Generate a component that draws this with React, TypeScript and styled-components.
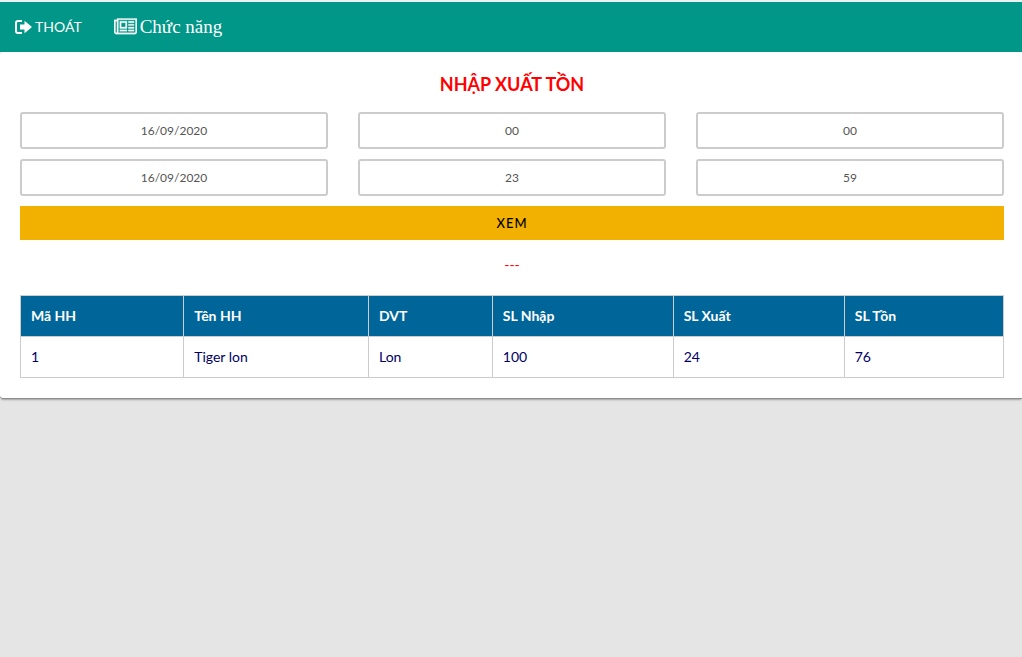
import React from "react";
import styled, { createGlobalStyle } from "styled-components";

const GlobalStyle = createGlobalStyle`
  *, *::before, *::after { box-sizing: border-box; }
  body {
    margin: 0;
    background: #e5e5e5;
    color: #444;
    font-family: Lato, "Open Sans", sans-serif;
    font-size: 14px;
    line-height: 20px;
  }
`;

const Page = styled.div`
  min-height: 100vh;
`;

const Header = styled.header`
  display: flex;
  align-items: center;
  gap: 32px;
  height: 52px;
  padding: 0 15px;
  background: #009688;
  border-top: 2px solid #e9f2f1;
`;

const NavLink = styled.a<{ $serif?: boolean }>`
  display: inline-flex;
  align-items: center;
  gap: 3px;
  color: #fff;
  text-decoration: none;
  font-family: ${(p) => (p.$serif ? '"Liberation Serif", serif' : "Lato, sans-serif")};
  font-size: ${(p) => (p.$serif ? "19px" : "14px")};
  line-height: 22px;
`;

const Card = styled.main`
  padding: 20px 18px 20px 20px;
  background: #fff;
  border-radius: 3px 0 0 3px;
  box-shadow: 0 1px 0 #8c908e, 0 3px 2px -1px rgba(0, 0, 0, 0.3);
`;

const Title = styled.h1`
  margin: 0 0 16px;
  color: #f00;
  font-size: 18px;
  line-height: 24px;
  font-weight: 700;
  text-align: center;
`;

const Fields = styled.div`
  display: grid;
  grid-template-columns: repeat(3, minmax(0, 1fr));
  gap: 10px 30px;
`;

const Field = styled.input`
  width: 100%;
  height: 37px;
  padding: 0 10px;
  border: 2px solid #ccc;
  border-radius: 3px;
  background: #fff;
  color: #555;
  font-family: inherit;
  font-size: 12px;
  text-align: center;
`;

const Submit = styled.button`
  display: block;
  width: 100%;
  height: 34px;
  margin-top: 10px;
  padding: 0;
  border: 0;
  background: #f2b000;
  color: #000;
  font-family: inherit;
  font-size: 13px;
  font-weight: 500;
  letter-spacing: 1px;
  cursor: pointer;
`;

const Status = styled.p`
  margin: 15px 0 20px;
  color: #f00;
  text-align: center;
`;

const Table = styled.table`
  width: 100%;
  border-collapse: collapse;
  table-layout: fixed;
`;

const cell = `
  height: 41px;
  padding: 0 10px;
  border: 1px solid #ccc;
  text-align: left;
`;

const HeadCell = styled.th<{ $width: number }>`
  ${cell}
  width: ${(p) => p.$width}%;
  background: #006699;
  color: #fff;
  font-weight: 700;
`;

const Cell = styled.td`
  ${cell}
  color: #000066;
`;

const columns = [
  { label: "Mã HH", width: 16.6 },
  { label: "Tên HH", width: 18.8 },
  { label: "DVT", width: 12.6 },
  { label: "SL Nhập", width: 18.4 },
  { label: "SL Xuất", width: 17.4 },
  { label: "SL Tồn", width: 16.2 },
];

const rows = [["1", "Tiger lon", "Lon", "100", "24", "76"]];

const fields = [
  { label: "Từ ngày", value: "16/09/2020" },
  { label: "Từ giờ", value: "00" },
  { label: "Từ phút", value: "00" },
  { label: "Đến ngày", value: "16/09/2020" },
  { label: "Đến giờ", value: "23" },
  { label: "Đến phút", value: "59" },
];

const LogoutIcon = () => (
  <svg width="17" height="14" viewBox="0 0 17 14" fill="none" aria-hidden="true">
    <path d="M7 1H3Q1 1 1 3V11Q1 13 3 13H7" stroke="currentColor" strokeWidth="2" />
    <path d="M5 4.5H9.5V0.8L17 7L9.5 13.2V9.5H5Z" fill="currentColor" />
  </svg>
);

const NewspaperIcon = () => (
  <svg width="23" height="20" viewBox="0 0 2048 1792" fill="currentColor" aria-hidden="true">
    <path d="M1024 512h-384v384h384v-384zm128 640v128h-640v-128h640zm0-768v640h-640v-640h640zm640 768v128h-512v-128h512zm0-256v128h-512v-128h512zm0-256v128h-512v-128h512zm0-256v128h-512v-128h512zm-1536 960v-960h-128v960q0 26 19 45t45 19 45-19 19-45zm1664 0v-1088h-1536v1088q0 33-11 64h1483q26 0 45-19t19-45zm128-1216v1216q0 80-56 136t-136 56h-1664q-80 0-136-56t-56-136v-1088h256v-128h1792z" stroke="currentColor" strokeWidth="24" />
  </svg>
);

export default function App() {
  return (
    <Page>
      <GlobalStyle />
      <Header>
        <NavLink href="#logout">
          <LogoutIcon />
          THOÁT
        </NavLink>
        <NavLink href="#menu" $serif>
          <NewspaperIcon />
          Chức năng
        </NavLink>
      </Header>
      <Card>
        <Title>NHẬP XUẤT TỒN</Title>
        <form onSubmit={(e) => e.preventDefault()}>
          <Fields>
            {fields.map((f) => (
              <Field key={f.label} aria-label={f.label} defaultValue={f.value} />
            ))}
          </Fields>
          <Submit type="submit">XEM</Submit>
        </form>
        <Status>---</Status>
        <Table>
          <thead>
            <tr>
              {columns.map((c) => (
                <HeadCell key={c.label} scope="col" $width={c.width}>
                  {c.label}
                </HeadCell>
              ))}
            </tr>
          </thead>
          <tbody>
            {rows.map((r) => (
              <tr key={r[0]}>
                {r.map((v, i) => (
                  <Cell key={columns[i].label}>{v}</Cell>
                ))}
              </tr>
            ))}
          </tbody>
        </Table>
      </Card>
    </Page>
  );
}
